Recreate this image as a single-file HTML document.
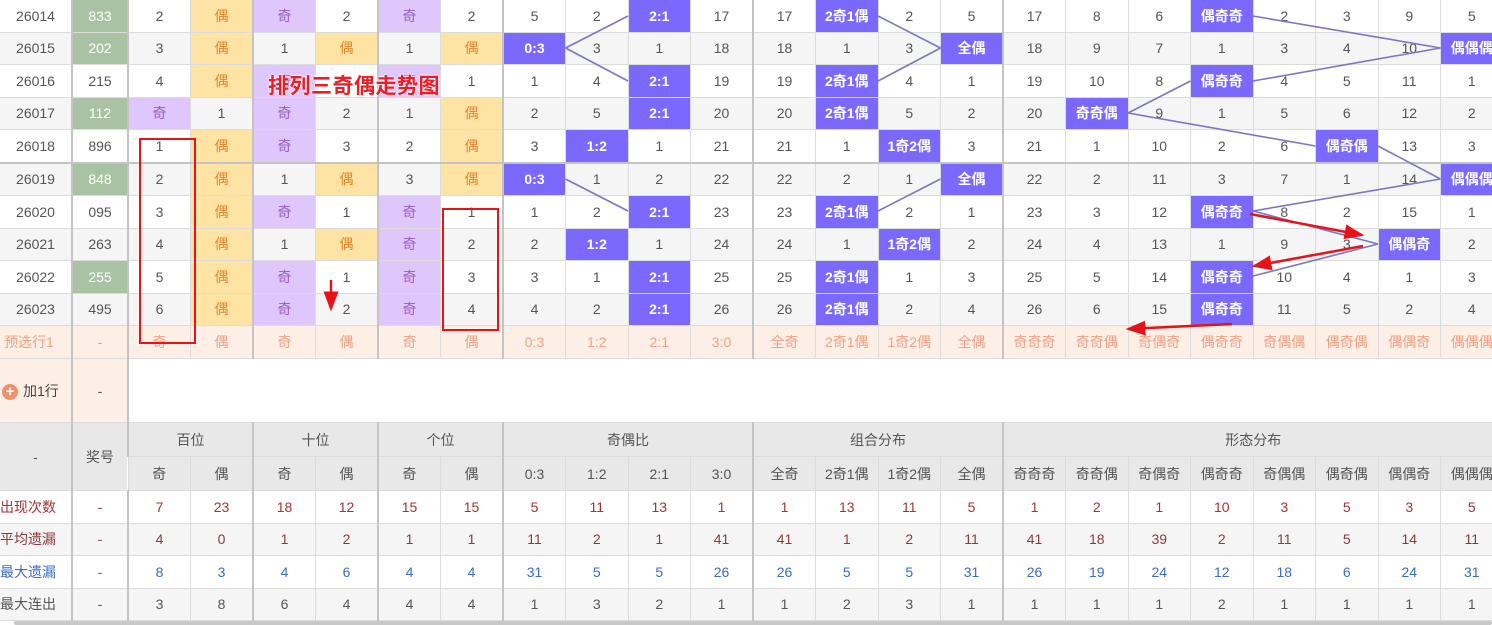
<!DOCTYPE html>
<html><head><meta charset="utf-8">
<style>
html,body{margin:0;padding:0;width:1492px;height:625px;overflow:hidden;background:#fff}
body{position:relative;font-family:"Liberation Sans","Noto Sans CJK SC",sans-serif;font-size:14px;color:#555}
table{border-collapse:collapse;table-layout:fixed;width:1503px;position:absolute;left:0;top:-1px}
td{text-align:center;border:1px solid #dcdcdc;padding:0;white-space:nowrap;overflow:hidden;height:31.5px}
tr td:first-child{border-left:none}
tr.a td{background:#fff}
tr.z td{background:#f5f5f5}
tr.d td:nth-child(2),tr.d td:nth-child(3),tr.d td:nth-child(5),tr.d td:nth-child(7),tr.d td:nth-child(9),tr.d td:nth-child(13),tr.d td:nth-child(17){border-left:2px solid #c4c4c4}
tr.g5 td{border-bottom:2px solid #c4c4c4}
tr.d td.y{background:#fee4a4;color:#e8842c}
tr.d td.p{background:#e0c7fb;color:#9a5cc0}
tr.d td.b{background:#7b68fc;color:#fff;font-weight:bold}
tr.d td.g{background:#a9c2a3;color:#fff}
tr.pre td{background:#fdeee6;color:#f0a184;height:32px}
tr.add td{height:63px}
tr.h td{background:#e8e8e8;color:#555;height:33px}
td.L{border-left:2px solid #c4c4c4}
.r1 td{color:#a83232}.r2 td{color:#8b3b3b}.r3 td{color:#3d6bbf}
.title{position:absolute;left:268px;top:70px;color:#ee1c24;font-size:21px;font-weight:bold;letter-spacing:0.5px;text-shadow:0 0 2px #fff,0 0 2px #fff}
.box{position:absolute;border:2.5px solid #e5141b}
svg{position:absolute;left:0;top:0}
.plus{display:inline-block;width:16px;height:16px;border-radius:50%;background:#f0906c;color:#fff;font-size:15px;line-height:16px;font-weight:bold;vertical-align:middle;margin-right:5px;text-align:center}
.sb{position:absolute;left:14px;top:621px;width:1478px;height:4px;background:#c8c8c8;border-radius:2px}
</style></head><body>
<table>
<colgroup><col style="width:72px"><col style="width:56px">
<col style="width:62.5px"><col style="width:62.5px"><col style="width:62.5px"><col style="width:62.5px"><col style="width:62.5px"><col style="width:62.5px">
<col style="width:62.5px"><col style="width:62.5px"><col style="width:62.5px"><col style="width:62.5px">
<col style="width:62.5px"><col style="width:62.5px"><col style="width:62.5px"><col style="width:62.5px">
<col style="width:62.5px"><col style="width:62.5px"><col style="width:62.5px"><col style="width:62.5px"><col style="width:62.5px"><col style="width:62.5px"><col style="width:62.5px"><col style="width:62.5px">
</colgroup>
<tr class="d a"><td>26014</td><td class="g">833</td><td>2</td><td class="y">偶</td><td class="p">奇</td><td>2</td><td class="p">奇</td><td>2</td><td>5</td><td>2</td><td class="b">2:1</td><td>17</td><td>17</td><td class="b">2奇1偶</td><td>2</td><td>5</td><td>17</td><td>8</td><td>6</td><td class="b">偶奇奇</td><td>2</td><td>3</td><td>9</td><td>5</td></tr>
<tr class="d z"><td>26015</td><td class="g">202</td><td>3</td><td class="y">偶</td><td>1</td><td class="y">偶</td><td>1</td><td class="y">偶</td><td class="b">0:3</td><td>3</td><td>1</td><td>18</td><td>18</td><td>1</td><td>3</td><td class="b">全偶</td><td>18</td><td>9</td><td>7</td><td>1</td><td>3</td><td>4</td><td>10</td><td class="b">偶偶偶</td></tr>
<tr class="d a"><td>26016</td><td>215</td><td>4</td><td class="y">偶</td><td class="p">奇</td><td>1</td><td class="p">奇</td><td>1</td><td>1</td><td>4</td><td class="b">2:1</td><td>19</td><td>19</td><td class="b">2奇1偶</td><td>4</td><td>1</td><td>19</td><td>10</td><td>8</td><td class="b">偶奇奇</td><td>4</td><td>5</td><td>11</td><td>1</td></tr>
<tr class="d z"><td>26017</td><td class="g">112</td><td class="p">奇</td><td>1</td><td class="p">奇</td><td>2</td><td>1</td><td class="y">偶</td><td>2</td><td>5</td><td class="b">2:1</td><td>20</td><td>20</td><td class="b">2奇1偶</td><td>5</td><td>2</td><td>20</td><td class="b">奇奇偶</td><td>9</td><td>1</td><td>5</td><td>6</td><td>12</td><td>2</td></tr>
<tr class="d a g5"><td>26018</td><td>896</td><td>1</td><td class="y">偶</td><td class="p">奇</td><td>3</td><td>2</td><td class="y">偶</td><td>3</td><td class="b">1:2</td><td>1</td><td>21</td><td>21</td><td>1</td><td class="b">1奇2偶</td><td>3</td><td>21</td><td>1</td><td>10</td><td>2</td><td>6</td><td class="b">偶奇偶</td><td>13</td><td>3</td></tr>
<tr class="d z"><td>26019</td><td class="g">848</td><td>2</td><td class="y">偶</td><td>1</td><td class="y">偶</td><td>3</td><td class="y">偶</td><td class="b">0:3</td><td>1</td><td>2</td><td>22</td><td>22</td><td>2</td><td>1</td><td class="b">全偶</td><td>22</td><td>2</td><td>11</td><td>3</td><td>7</td><td>1</td><td>14</td><td class="b">偶偶偶</td></tr>
<tr class="d a"><td>26020</td><td>095</td><td>3</td><td class="y">偶</td><td class="p">奇</td><td>1</td><td class="p">奇</td><td>1</td><td>1</td><td>2</td><td class="b">2:1</td><td>23</td><td>23</td><td class="b">2奇1偶</td><td>2</td><td>1</td><td>23</td><td>3</td><td>12</td><td class="b">偶奇奇</td><td>8</td><td>2</td><td>15</td><td>1</td></tr>
<tr class="d z"><td>26021</td><td>263</td><td>4</td><td class="y">偶</td><td>1</td><td class="y">偶</td><td class="p">奇</td><td>2</td><td>2</td><td class="b">1:2</td><td>1</td><td>24</td><td>24</td><td>1</td><td class="b">1奇2偶</td><td>2</td><td>24</td><td>4</td><td>13</td><td>1</td><td>9</td><td>3</td><td class="b">偶偶奇</td><td>2</td></tr>
<tr class="d a"><td>26022</td><td class="g">255</td><td>5</td><td class="y">偶</td><td class="p">奇</td><td>1</td><td class="p">奇</td><td>3</td><td>3</td><td>1</td><td class="b">2:1</td><td>25</td><td>25</td><td class="b">2奇1偶</td><td>1</td><td>3</td><td>25</td><td>5</td><td>14</td><td class="b">偶奇奇</td><td>10</td><td>4</td><td>1</td><td>3</td></tr>
<tr class="d z"><td>26023</td><td>495</td><td>6</td><td class="y">偶</td><td class="p">奇</td><td>2</td><td class="p">奇</td><td>4</td><td>4</td><td>2</td><td class="b">2:1</td><td>26</td><td>26</td><td class="b">2奇1偶</td><td>2</td><td>4</td><td>26</td><td>6</td><td>15</td><td class="b">偶奇奇</td><td>11</td><td>5</td><td>2</td><td>4</td></tr>
<tr class="d pre"><td style="text-align:left;padding-left:4px">预选行1</td><td>-</td><td>奇</td><td>偶</td><td>奇</td><td>偶</td><td>奇</td><td>偶</td><td>0:3</td><td>1:2</td><td>2:1</td><td>3:0</td><td>全奇</td><td>2奇1偶</td><td>1奇2偶</td><td>全偶</td><td>奇奇奇</td><td>奇奇偶</td><td>奇偶奇</td><td>偶奇奇</td><td>奇偶偶</td><td>偶奇偶</td><td>偶偶奇</td><td>偶偶偶</td></tr>
<tr class="add"><td style="background:#fdeee6;text-align:left;padding-left:2px;color:#444"><span class="plus">+</span>加1行</td><td style="background:#fdeee6" class="L">-</td><td colspan="22" class="L" style="background:#fff"></td></tr>
<tr class="h"><td rowspan="2">-</td><td rowspan="2" class="L">奖号</td><td colspan="2" class="L">百位</td><td colspan="2" class="L">十位</td><td colspan="2" class="L">个位</td><td colspan="4" class="L">奇偶比</td><td colspan="4" class="L">组合分布</td><td colspan="8" class="L">形态分布</td></tr>
<tr class="h"><td class="L">奇</td><td>偶</td><td class="L">奇</td><td>偶</td><td class="L">奇</td><td>偶</td><td class="L">0:3</td><td>1:2</td><td>2:1</td><td>3:0</td><td class="L">全奇</td><td>2奇1偶</td><td>1奇2偶</td><td>全偶</td><td class="L">奇奇奇</td><td>奇奇偶</td><td>奇偶奇</td><td>偶奇奇</td><td>奇偶偶</td><td>偶奇偶</td><td>偶偶奇</td><td>偶偶偶</td></tr>
<tr class="d a r1"><td style="text-align:left">出现次数</td><td>-</td><td>7</td><td>23</td><td>18</td><td>12</td><td>15</td><td>15</td><td>5</td><td>11</td><td>13</td><td>1</td><td>1</td><td>13</td><td>11</td><td>5</td><td>1</td><td>2</td><td>1</td><td>10</td><td>3</td><td>5</td><td>3</td><td>5</td></tr>
<tr class="d z r2"><td style="text-align:left">平均遗漏</td><td>-</td><td>4</td><td>0</td><td>1</td><td>2</td><td>1</td><td>1</td><td>11</td><td>2</td><td>1</td><td>41</td><td>41</td><td>1</td><td>2</td><td>11</td><td>41</td><td>18</td><td>39</td><td>2</td><td>11</td><td>5</td><td>14</td><td>11</td></tr>
<tr class="d a r3"><td style="text-align:left">最大遗漏</td><td>-</td><td>8</td><td>3</td><td>4</td><td>6</td><td>4</td><td>4</td><td>31</td><td>5</td><td>5</td><td>26</td><td>26</td><td>5</td><td>5</td><td>31</td><td>26</td><td>19</td><td>24</td><td>12</td><td>18</td><td>6</td><td>24</td><td>31</td></tr>
<tr class="d z r4"><td style="text-align:left">最大连出</td><td>-</td><td>3</td><td>8</td><td>6</td><td>4</td><td>4</td><td>4</td><td>1</td><td>3</td><td>2</td><td>1</td><td>1</td><td>2</td><td>3</td><td>1</td><td>1</td><td>1</td><td>1</td><td>2</td><td>1</td><td>1</td><td>1</td><td>1</td></tr>
</table>
<svg id="ov" width="1492" height="625" viewBox="0 0 1492 625">
<defs><marker id="ah" markerWidth="8" markerHeight="6" refX="7" refY="3" orient="auto"><path d="M0,0 L8,3 L0,6 Z" fill="#e5141b"/></marker></defs>
<g id="ln" stroke="#7a78c2" stroke-width="1.6" fill="none"></g>
<g stroke="#e5141b" stroke-width="2.5" fill="none">
<line x1="331" y1="280" x2="331" y2="309" marker-end="url(#ah)"/>
<line x1="1250" y1="214" x2="1362" y2="235" marker-end="url(#ah)"/>
<line x1="1363" y1="246" x2="1254" y2="266" marker-end="url(#ah)"/>
<line x1="1232" y1="324" x2="1128" y2="329" marker-end="url(#ah)"/>
</g>
</svg>
<div class="box" style="left:139px;top:138px;width:53px;height:202px"></div>
<div class="box" style="left:442px;top:208px;width:53px;height:119px"></div>
<div class="title">排列三奇偶走势图</div>
<div class="sb"></div>
<script>
var W=62.5,cy=[16,48,81,113,146,179,211,244,276,309];
var groups=[[503,[2,0,2,2,1,0,2,1,2,2]],[753,[1,3,1,1,2,3,1,2,1,1]],[1003,[3,7,3,1,5,7,3,6,3,3]]];
var s='';
groups.forEach(function(g){var x0=g[0],c=g[1];for(var i=0;i<9;i++){var a=c[i],b=c[i+1];if(Math.abs(a-b)<=1)continue;var x1,x2;if(b>a){x1=x0+(a+1)*W;x2=x0+b*W;}else{x1=x0+a*W;x2=x0+(b+1)*W;}s+='<line x1="'+x1+'" y1="'+cy[i]+'" x2="'+x2+'" y2="'+cy[i+1]+'"/>';}});
document.getElementById('ln').innerHTML=s;
</script>
</body></html>
